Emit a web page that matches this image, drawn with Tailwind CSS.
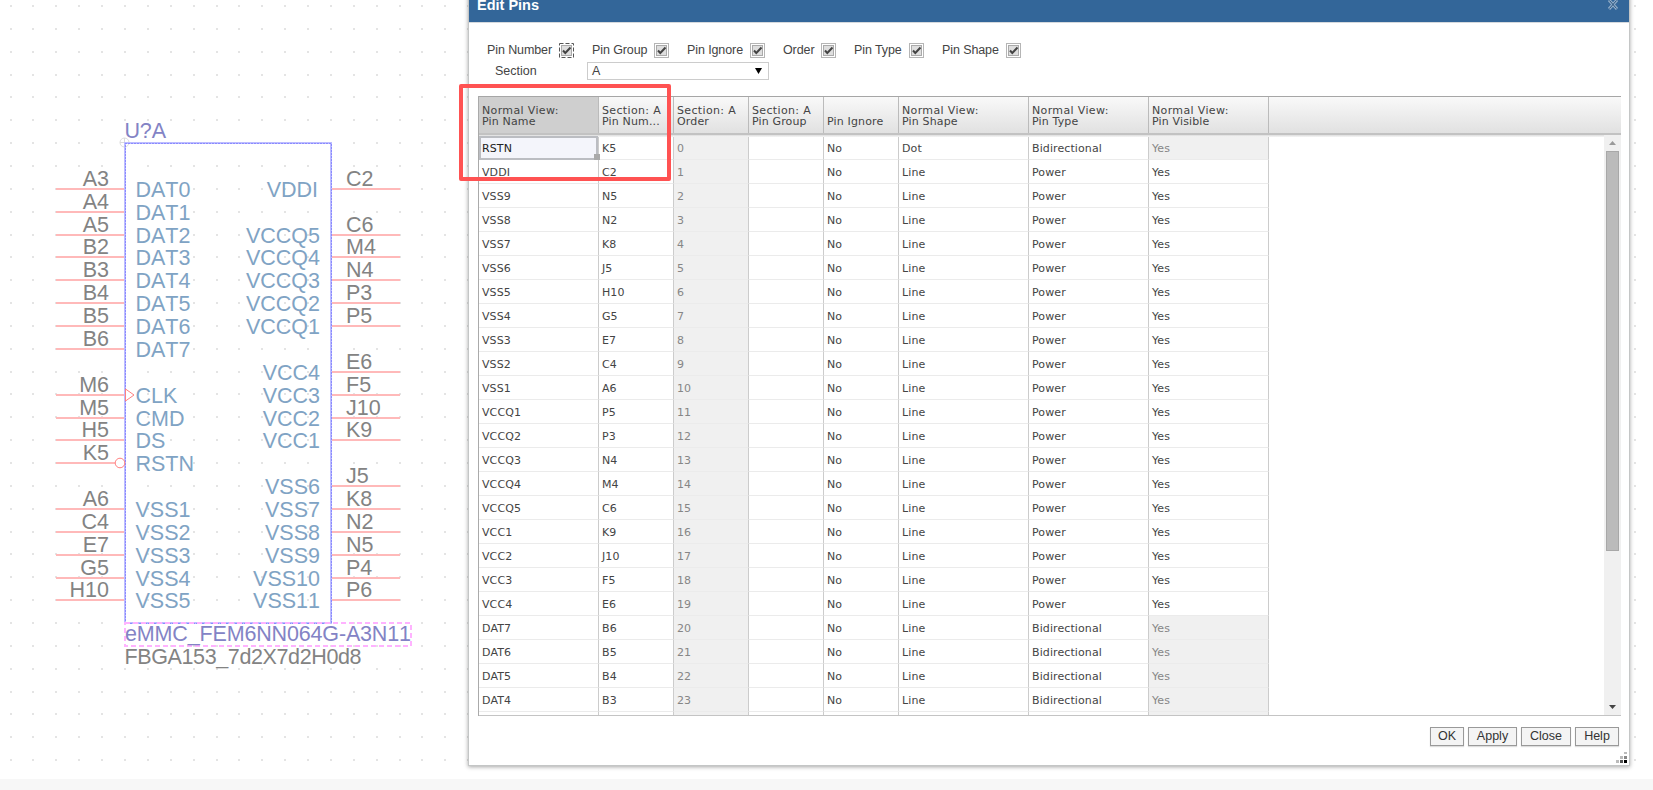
<!DOCTYPE html>
<html lang="en">
<head>
    <meta charset="UTF-8">
    <meta name="viewport" content="width=device-width, initial-scale=1.0">
    <title>Edit Pins</title>
    <script src="https://cdn.jsdelivr.net/npm/@tailwindcss/browser@4"></script>
</head>
<body class="relative w-[1653px] h-[790px] overflow-hidden bg-[#f7f7f7] font-['Liberation_Sans',sans-serif] text-[12.5px] text-[#444]">
    <!-- Schematic canvas -->
    <svg id="canvas" class="block bg-white" width="1653" height="779" viewBox="0 0 1653 779">
        <g id="dots" fill="#e4e4e4"></g>
        <g fill="none" stroke="#dcdcdc">
            <circle cx="124.500" cy="142.500" r="4.500"/>
            <path d="M120 142.500h9M124.500 138v9"/>
        </g>
        <g id="pins"></g>
        <g shape-rendering="crispEdges" fill="none">
            <rect x="125" y="143" width="206" height="480" stroke="#bdbdff" stroke-width="2"/>
            <rect x="125" y="143" width="206" height="480" stroke="#8a8aff" stroke-width="1" stroke-dasharray="2 1"/>
            <rect x="125" y="623" width="286" height="23" stroke="#ffb3ff" stroke-width="1.500" stroke-dasharray="5 3"/>
        </g>
        <g fill="none" stroke="#ff8080">
            <path d="M125.500 389l8.500 6-8.500 6z"/>
            <circle cx="120" cy="463" r="4.800" fill="#fff"/>
        </g>
        <g font-size="21.500" style="font-kerning:none">
            <text x="124.500" y="137.500" fill="#8383c5" textLength="41.500">U?A</text>
            <text x="125" y="641" fill="#8383c5" textLength="286">eMMC_FEM6NN064G-A3N11</text>
            <text x="124.500" y="664" fill="#838383" textLength="237">FBGA153_7d2X7d2H0d8</text>
        </g>
    </svg>

    <!-- Edit Pins dialog -->
    <div class="absolute left-[468px] -top-[14px] w-[1162px] h-[780px] flex flex-col bg-white border border-[#c4c6c6] shadow-[0_1px_4px_rgba(0,0,0,0.35)]">
        <div class="h-[35px] shrink-0 flex justify-between bg-[#336699] pl-2 pr-[11px] pt-[10px]">
            <span class="text-[14.5px] leading-4 font-bold text-white">Edit Pins</span>
            <svg class="mt-[3px]" width="10" height="10" viewBox="0 0 10 10" fill="none">
                <path d="M1 0l8 9M9 0L1 9" stroke="#8fabc7" stroke-width="3"/>
                <path d="M1.500 0.500l7 8M8.500 0.500l-7 8" stroke="#2a557f"/>
            </svg>
        </div>
        <div class="h-px shrink-0 bg-[#d5d9dd]"></div>

        <!-- Column toggles -->
        <div id="toggles" class="h-[14px] mt-[20px] ml-[18px] flex shrink-0"></div>
        <div class="flex h-[18px] mt-[5px] ml-[26px] shrink-0">
            <span class="w-[92px] leading-[18px]">Section</span>
            <div class="w-[182px] border border-[#ccc] flex items-center justify-between pl-1 pr-[6px]">
                <span>A</span>
                <svg width="7" height="6"><path d="M0 0h7L3.500 6z" fill="#000"/></svg>
            </div>
        </div>

        <!-- Pin grid -->
        <div class="ml-[9px] mt-[16px] w-[1143px] h-[620px] shrink-0 flex flex-col overflow-hidden border-l border-[#aaa] font-['DejaVu_Sans',sans-serif] text-[11px]">
            <div id="head" class="h-[39px] shrink-0 flex border-t border-t-[#a6a6a6] border-b-2 border-b-[#c2c2c2] bg-linear-to-b from-[#f9f9f9] to-[#e1e1e1]"></div>
            <div class="h-[581px] flex border-b border-[#c4c4c4]">
                <div class="w-[1125px] pt-px overflow-hidden relative">
                    <div id="rows"></div>
                    <div class="absolute top-0 left-0 w-full h-[2px] bg-linear-to-b from-[#ddd] to-[#f6f6f6]"></div>
                    <div class="absolute left-0 top-px w-[119px] h-[24px] border-2 border-[#bbbdc2]"></div>
                    <div class="absolute left-[115px] top-[19px] w-[6px] h-[6px] bg-[#aaa]"></div>
                </div>
                <div class="w-[17px] bg-[#f0f0f0] flex flex-col items-center justify-between pt-[6px] pb-[6px]">
                    <svg class="shrink-0" width="7" height="4"><path d="M0 4L3.500 0L7 4z" fill="#9a9a9a"/></svg>
                    <div class="mt-[6px] w-[13px] h-[400px] bg-[#bbb] border border-[#a8a8a8]"></div>
                    <svg class="mt-auto shrink-0" width="7" height="4"><path d="M0 0h7L3.500 4z" fill="#444"/></svg>
                </div>
            </div>
        </div>

        <!-- Dialog buttons -->
        <div class="mt-[11px] ml-[961px] flex gap-1 text-[#333]">
            <button class="w-[34px] h-[19px] leading-[17px] border border-[#999] bg-[#f4f4f4] shadow-[0_1px_1px_#ddd]">OK</button>
            <button class="w-[49px] h-[19px] leading-[17px] border border-[#999] bg-[#f4f4f4] shadow-[0_1px_1px_#ddd]">Apply</button>
            <button class="w-[50px] h-[19px] leading-[17px] border border-[#999] bg-[#f4f4f4] shadow-[0_1px_1px_#ddd]">Close</button>
            <button class="w-[44px] h-[19px] leading-[17px] border border-[#999] bg-[#f4f4f4] shadow-[0_1px_1px_#ddd]">Help</button>
        </div>
        <svg class="absolute right-[2px] bottom-[2px]" width="11" height="11">
            <g fill="#bbb"><rect x="8" y="0" width="3" height="2"/><rect x="4" y="4" width="3" height="3"/><rect x="0" y="8" width="3" height="3"/></g>
            <rect x="8" y="4" width="3" height="3" fill="#888"/><rect x="4" y="8" width="3" height="3" fill="#555"/><rect x="8" y="8" width="3" height="3" fill="#000"/>
        </svg>
    </div>

    <!-- Highlight frame -->
    <div class="absolute left-[459px] top-[84px] w-[212px] h-[97px] border-[4px] border-[#ff5252] rounded-[2px]"></div>

    <script>
        // Grid dots, snapped to whole pixels
        let dots = '';
        for (let i = 0; i < 72; i++) {
            for (let j = 0; j < 34; j++) {
                dots += `<rect x="${Math.round(9.6 + i * 22.88)}" y="${Math.round(5 + j * 22.85)}" width="2" height="2"/>`;
            }
        }
        document.getElementById('dots').innerHTML = dots;

        // slot in grid steps of 22.87px from the first pin, number, name
        const left = [[0,'A3','DAT0'],[1,'A4','DAT1'],[2,'A5','DAT2'],[3,'B2','DAT3'],[4,'B3','DAT4'],[5,'B4','DAT5'],[6,'B5','DAT6'],[7,'B6','DAT7'],
            [9,'M6','CLK'],[10,'M5','CMD'],[11,'H5','DS'],[12,'K5','RSTN'],[14,'A6','VSS1'],[15,'C4','VSS2'],[16,'E7','VSS3'],[17,'G5','VSS4'],[18,'H10','VSS5']];
        const right = [[0,'C2','VDDI'],[2,'C6','VCCQ5'],[3,'M4','VCCQ4'],[4,'N4','VCCQ3'],[5,'P3','VCCQ2'],[6,'P5','VCCQ1'],
            [8,'E6','VCC4'],[9,'F5','VCC3'],[10,'J10','VCC2'],[11,'K9','VCC1'],[13,'J5','VSS6'],[14,'K8','VSS7'],[15,'N2','VSS8'],[16,'N5','VSS9'],[17,'P4','VSS10'],[18,'P6','VSS11']];
        const text = (x, y, s, color, anchor) => `<text x="${x}" y="${y}" fill="${color}" text-anchor="${anchor}" font-size="21.500" style="font-kerning:none">${s}</text>`;
        const pin = (x, width, y) => `<rect x="${x}" y="${y - 1}" width="${width}" height="2" fill="#ffb9b9"/>`;
        const lineY = n => Math.round(188.8 + n * 22.87);
        let out = '';
        for (const [n, num, name] of left) {
            const y = lineY(n);
            out += pin(56, name === 'RSTN' ? 59 : 69, y) + text(109, y - 3, num, '#838383', 'end') + text(135.5, y + 8, name, '#80a3c4', 'start');
        }
        for (const [n, num, name] of right) {
            const y = lineY(n);
            out += pin(331, 69, y) + text(346, y - 3, num, '#838383', 'start') + text(name === 'VDDI' ? 318 : 320, y + 8, name, '#80a3c4', 'end');
        }
        document.getElementById('pins').innerHTML = out;

        // Toggles: label, width up to the next one
        const toggles = [['Pin Number', 105], ['Pin Group', 95], ['Pin Ignore', 96], ['Order', 71], ['Pin Type', 88], ['Pin Shape', 80]];
        const boxAt = [72, 62, 63, 38, 55, 64];
        document.getElementById('toggles').innerHTML = toggles.map(([label, w], i) => `
            <div class="flex" style="width:${w}px">
                <span class="leading-[14px] whitespace-nowrap tracking-[-0.1px]" style="width:${boxAt[i]}px">${label}</span>
                <svg class="shrink-0" width="15" height="15" viewBox="0 0 15 15">
                    <rect x="0.500" y="0.500" width="14" height="14" fill="#fff" stroke="${i ? '#b5b5b5' : '#555'}" ${i ? '' : 'stroke-dasharray="4 2"'}/>
                    <rect x="2.500" y="2.500" width="10" height="10" fill="#dedede" stroke="#aaa"/>
                    <path d="M4 7.500L6.300 10L11.500 4.500" fill="none" stroke="#444" stroke-width="2"/>
                </svg>
            </div>`).join('');

        const columns = [['Normal View:', 'Pin Name', 120], ['Section: A', 'Pin Num...', 75], ['Section: A', 'Order', 75], ['Section: A', 'Pin Group', 75],
            ['', 'Pin Ignore', 75], ['Normal View:', 'Pin Shape', 130], ['Normal View:', 'Pin Type', 120], ['Normal View:', 'Pin Visible', 120]];
        document.getElementById('head').innerHTML = columns.map(([a, b, w], i) => `
            <div class="h-full flex flex-col justify-end pl-[3px] pb-[6px] leading-[11px] whitespace-nowrap border-r border-[#bbb] ${i ? '' : 'bg-[#cfcfcf]'}" style="width:${w}px">
                <span class="tracking-[0.35px]">${a}</span><span class="tracking-[0.15px]">${b}</span>
            </div>`).join('');

        const pins = 'RSTN K5,VDDI C2,VSS9 N5,VSS8 N2,VSS7 K8,VSS6 J5,VSS5 H10,VSS4 G5,VSS3 E7,VSS2 C4,VSS1 A6,VCCQ1 P5,VCCQ2 P3,VCCQ3 N4,VCCQ4 M4,VCCQ5 C6,VCC1 K9,VCC2 J10,VCC3 F5,VCC4 E6,DAT7 B6,DAT6 B5,DAT5 B4,DAT4 B3';
        const rows = pins.split(',').map((p, i) => {
            const bidi = i === 0 || i > 19;
            return [...p.split(' '), i, '', 'No', i ? 'Line' : 'Dot', bidi ? 'Bidirectional' : 'Power', 'Yes'];
        });
        rows.push(Array(8).fill(''));
        document.getElementById('rows').innerHTML = rows.map((r, n) => '<div class="flex h-[24px]">' + r.map((v, i) => {
            const locked = i === 2 || (i === 7 && (n === 0 || n > 19));
            const tone = locked ? 'bg-[#f0f0f0] text-[#868686]' : n === 0 && i === 0 ? 'bg-[#f4f5fb] text-[#222]' : '';
            return `<div class="pl-[3px] leading-[25px] tracking-[0.1px] border-r border-r-[#ccc] border-b border-b-[#ebebeb] ${tone}" style="width:${columns[i][2]}px">${v}</div>`;
        }).join('') + '</div>').join('');
    </script>
</body>
</html>
